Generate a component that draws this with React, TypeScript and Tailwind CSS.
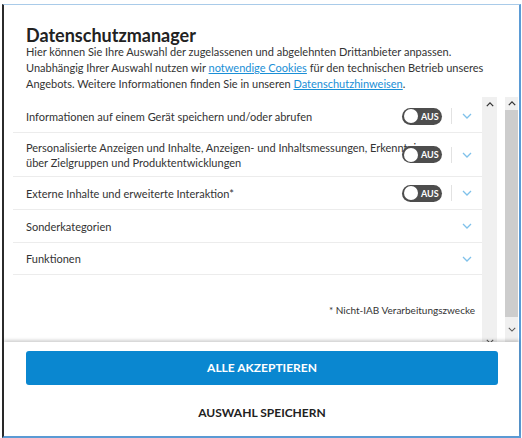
import React from 'react';

const font = { fontFamily: 'Lato, "Noto Sans", Arial, sans-serif' };

const ChevronDown = ({ className = '' }: { className?: string }) => (
  <svg viewBox="0 0 10 6" className={className} fill="none" stroke="currentColor" strokeWidth="1.3">
    <polyline points="1,1 5,5 9,1" />
  </svg>
);

const ChevronUp = ({ className = '' }: { className?: string }) => (
  <svg viewBox="0 0 10 6" className={className} fill="none" stroke="currentColor" strokeWidth="1.6">
    <polyline points="1,5 5,1 9,5" />
  </svg>
);

const Toggle = () => (
  <div className="relative z-10 flex h-[17px] w-[40px] items-center rounded-full bg-[#4d4d4d] pl-[2px]">
    <span className="h-[14px] w-[14px] rounded-full bg-white" />
    <span className="ml-[3px] text-[9px] font-bold leading-none text-white">AUS</span>
  </div>
);

interface Row {
  label: React.ReactNode;
  toggle: boolean;
  height: string;
}

const rows: Row[] = [
  { label: 'Informationen auf einem Gerät speichern und/oder abrufen', toggle: true, height: 'h-[33px]' },
  {
    label: (
      <>
        Personalisierte Anzeigen und Inhalte, Anzeigen- und Inhaltsmessungen, Erkenntnisse
        <br />
        über Zielgruppen und Produktentwicklungen
      </>
    ),
    toggle: true,
    height: 'h-[44px]',
  },
  { label: 'Externe Inhalte und erweiterte Interaktion*', toggle: true, height: 'h-[33px]' },
  { label: 'Sonderkategorien', toggle: false, height: 'h-[33px]' },
  { label: 'Funktionen', toggle: false, height: 'h-[32px]' },
];

export default function App() {
  return (
    <div className="h-[438px] w-[522px] overflow-hidden bg-white pt-[4px]" style={font}>
      <div className="ml-[2px] flex h-[434px] w-[519px] flex-col border-t border-b-2 border-l-2 border-r-2 border-t-[#a9cbe9] border-b-[#5b9bd5] border-l-[#2b2b2b] border-r-[#5b9bd5]">
        {/* Kopf */}
        <div className="pl-[22px] pr-[10px] pt-[19px]">
          <h1 className="text-[18px] font-bold leading-[22px] text-[#222]">Datenschutzmanager</h1>
          <p className="mt-[-2px] whitespace-nowrap text-[11px] leading-[16px] text-[#333]">
            Hier können Sie Ihre Auswahl der zugelassenen und abgelehnten Drittanbieter anpassen.
            <br />
            Unabhängig Ihrer Auswahl nutzen wir{' '}
            <a className="text-[#1a8fd6] underline">notwendige Cookies</a> für den technischen Betrieb unseres
            <br />
            Angebots. Weitere Informationen finden Sie in unseren{' '}
            <a className="text-[#1a8fd6] underline">Datenschutzhinweisen</a>.
          </p>
        </div>

        {/* Liste */}
        <div className="mt-[5px] flex h-[245px]">
          <div className="w-[478px] pl-[9px] pt-[3px]">
            {rows.map((row, i) => (
              <div
                key={i}
                className={`flex ${row.height} items-center border-b border-[#ececec] pl-[13px] text-[11px] leading-[15px] text-[#333]`}
              >
                <div className="mr-[-30px] flex-1 whitespace-nowrap overflow-hidden">{row.label}</div>
                {row.toggle ? (
                  <>
                    <Toggle />
                    <span className="ml-[9px] h-[16px] w-px bg-[#e2e2e2]" />
                  </>
                ) : null}
                <ChevronDown className={`${row.toggle ? 'ml-[10px]' : 'ml-0'} mr-[10px] h-[6px] w-[10px] text-[#7fc1ea]`} />
              </div>
            ))}
            <div className="mr-[7px] mt-[28px] text-right text-[10px] leading-[14px] text-[#333]">
              * Nicht-IAB Verarbeitungszwecke
            </div>
          </div>
          {/* innere Scrollleiste */}
          <div className="flex w-[15px] flex-col items-center bg-[#f0f0f0] pt-[5px]">
            <ChevronUp className="h-[5px] w-[8px] text-[#333]" />
            <div className="flex-1" />
            <ChevronDown className="mb-[-2px] h-[5px] w-[8px] text-[#555]" />
          </div>
          <div className="w-[8px]" />
          {/* äußere Scrollleiste */}
          <div className="flex w-[13px] flex-col bg-[#f0f0f0]">
            <div className="flex h-[13px] items-center justify-center">
              <ChevronUp className="h-[5px] w-[8px] text-[#333]" />
            </div>
            <div className="h-[207px] bg-[#cdcdcd]" />
            <div className="flex flex-1 items-center justify-center">
              <ChevronDown className="h-[5px] w-[8px] text-[#555]" />
            </div>
          </div>
        </div>

        {/* Fuß */}
        <div className="relative z-10 flex flex-1 flex-col bg-white pt-[9px] shadow-[0_-2px_3px_rgba(0,0,0,0.18)]">
          <button className="ml-[22px] h-[34px] w-[472px] rounded-[3px] bg-[#0a87d0] text-[12px] font-bold text-white">
            ALLE AKZEPTIEREN
          </button>
          <button className="mt-[20px] ml-[22px] w-[472px] text-[12px] font-bold leading-[16px] text-[#222]">
            AUSWAHL SPEICHERN
          </button>
        </div>
      </div>
    </div>
  );
}
